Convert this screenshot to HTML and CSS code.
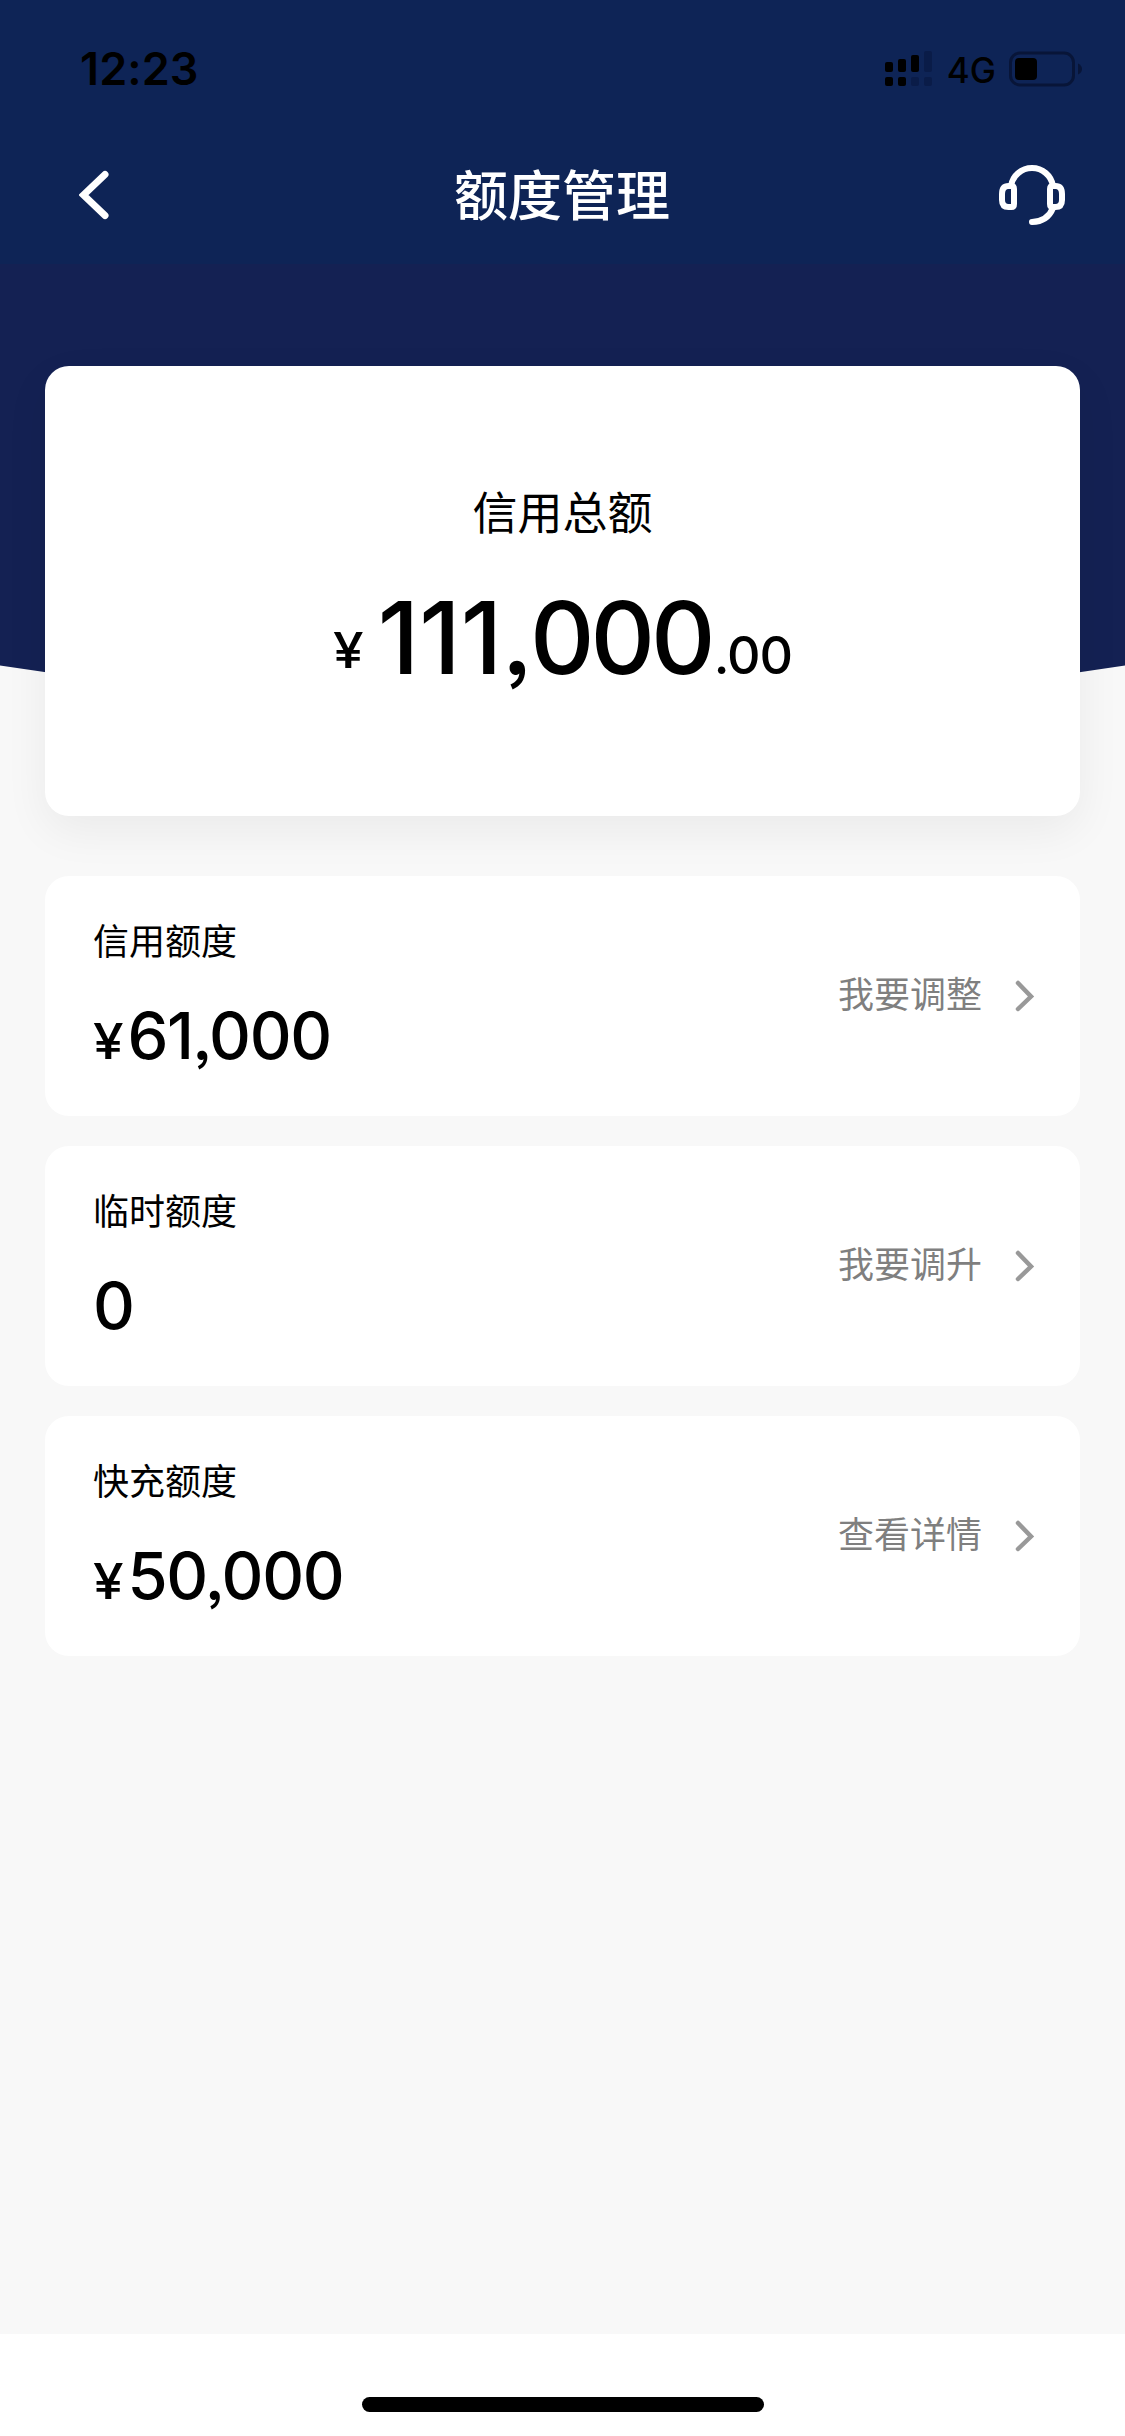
FILE: index.html
```html
<!DOCTYPE html>
<html lang="zh-CN">
<head>
<meta charset="utf-8">
<title>额度管理</title>
<link rel="stylesheet" href="styles.css">
</head>
<body>
<div class="screen">
  <header class="header">
    <div class="status">
      <span class="time">12:23</span>
      <div class="indicators">
        <svg class="signal" width="47" height="36" viewBox="0 0 47 36">
          <rect x="0" y="11" width="8" height="10" rx="2"/>
          <rect x="13" y="8" width="8" height="13" rx="2"/>
          <rect x="26" y="4" width="8" height="17" rx="2"/>
          <rect class="dim" x="39" y="0" width="8" height="21" rx="2"/>
          <rect x="0" y="26" width="8" height="9" rx="2"/>
          <rect x="13" y="26" width="8" height="9" rx="2"/>
          <rect class="dim" x="26" y="26" width="8" height="9" rx="2"/>
          <rect class="dim" x="39" y="26" width="8" height="9" rx="2"/>
        </svg>
        <span class="network">4G</span>
        <svg class="battery" width="74" height="36" viewBox="0 0 74 36">
          <rect x="1.5" y="2" width="63" height="32" rx="9.5" fill="none" stroke="#081538" stroke-width="3"/>
          <rect x="6" y="7" width="22" height="22" rx="4"/>
          <path d="M69 12.500Q73 14.500 73 18T69 23.500Z" fill="#081538"/>
        </svg>
      </div>
    </div>
    <nav class="nav">
      <svg class="back" width="30" height="54" viewBox="0 0 30 54">
        <path d="M26 6.500L4.500 27L26 47.500" fill="none" stroke="#fff" stroke-width="7" stroke-linecap="round" stroke-linejoin="miter"/>
      </svg>
      <h1 class="title">额度管理</h1>
      <svg class="support" width="66" height="66" viewBox="0 0 66 66" fill="none" stroke="#fff" stroke-width="6" stroke-linecap="round">
        <path d="M12 24A21.250 21.250 0 0 1 54 24"/>
        <path d="M3 32Q3 24 9.500 24H12.500Q15 24 15 27V42Q15 45 12.500 45H9.500Q3 45 3 38Z"/>
        <path d="M63 32Q63 24 56.500 24H53.500Q51 24 51 27V42Q51 45 53.500 45H56.500Q63 45 63 38Z"/>
        <path d="M54 46Q48.500 59.500 33 60"/>
      </svg>
    </nav>
  </header>
  <main class="content">
    <section class="total">
      <h2 class="total-label">信用总额</h2>
      <p class="amount"><span class="yen">¥</span><span class="ones">111</span><span class="comma">,</span><span class="zeros">000</span><span class="cents">.00</span></p>
    </section>
    <a class="row">
      <div class="info"><span class="label">信用额度</span><span class="value"><span class="yen-small">¥</span>61,000</span></div>
      <div class="action"><span>我要调整</span><svg width="20" height="32" viewBox="0 0 20 32"><path d="M3 3L16 16.500L3 29"/></svg></div>
    </a>
    <a class="row">
      <div class="info"><span class="label">临时额度</span><span class="value">0</span></div>
      <div class="action"><span>我要调升</span><svg width="20" height="32" viewBox="0 0 20 32"><path d="M3 3L16 16.500L3 29"/></svg></div>
    </a>
    <a class="row">
      <div class="info"><span class="label">快充额度</span><span class="value"><span class="yen-small">¥</span>50,000</span></div>
      <div class="action"><span>查看详情</span><svg width="20" height="32" viewBox="0 0 20 32"><path d="M3 3L16 16.500L3 29"/></svg></div>
    </a>
  </main>
  <footer class="home"><div class="home-bar"></div></footer>
</div>
</body>
</html>
```
FILE: styles.css
```css
* { box-sizing: border-box; margin: 0; padding: 0; }
svg { display: block; flex: none; }
body { background: #fff; font-family: "Noto Sans CJK SC", "Noto Sans", sans-serif; color: #000; }
.screen { width: 1125px; height: 2436px; display: flex; flex-direction: column; overflow: hidden; }

.header { height: 264px; background: #0e2456; }
.status { height: 138px; padding: 0 42px 0 80px; display: flex; justify-content: space-between; align-items: center; }
.time { font: 600 45px/60px Inter, sans-serif; letter-spacing: 0.1px; }
.indicators { display: flex; align-items: center; }
.signal .dim { fill: #0a1c48; }
.network { font: 500 35px/40px Inter, sans-serif; margin: 2px 13px 0 15px; }
.nav { height: 114px; padding: 0 60px 0 79px; display: grid; grid-template-columns: 66px 1fr 66px; align-items: center; }
.title { font-size: 54px; font-weight: 500; line-height: 80px; color: #fff; text-align: center; padding: 0 20px 4px 0; }

.content { position: relative; flex: 1; background: #f8f8f8; padding: 102px 45px 0; display: flex; flex-direction: column; gap: 30px; }
/* Navy backdrop with a curved lower edge, lying behind the total card */
.content::before { content: ""; position: absolute; left: 0; top: 0; width: 1125px; height: 460px; background: #142153; clip-path: path("M0 0H1125V401.500Q562.500 489 0 401.500Z"); }
.total { position: relative; height: 450px; margin-bottom: 30px; padding-top: 112px; border-radius: 24px; background: #fff; box-shadow: 0 15px 45px rgba(0, 0, 0, 0.06); text-align: center; }
.total-label { font-size: 45px; font-weight: 400; line-height: 66px; }
.amount { margin-top: 34px; font: 500 100px/120px Inter, sans-serif; font-feature-settings: "ss03"; white-space: nowrap; }
.yen, .yen-small { display: inline-block; font-size: 50px; line-height: 1; transform: scaleX(1.1); transform-origin: left; }
.yen { vertical-align: 6px; margin-right: 17px; }
.comma { letter-spacing: -2.5px; }
.zeros { letter-spacing: -4px; }
.cents { font-size: 52px; line-height: 1; letter-spacing: -1px; margin-left: 2px; }

.row { height: 240px; padding: 36px 45px 0 48px; border-radius: 24px; background: #fff; display: flex; justify-content: space-between; align-items: flex-start; }
.info { display: flex; flex-direction: column; gap: 31px; }
.label { font-size: 36px; line-height: 54px; }
.value { font: 500 65px/78px Inter, sans-serif; letter-spacing: -1.4px; font-feature-settings: "ss03"; }
.yen-small { margin-right: 8px; }
.action { display: flex; align-items: center; gap: 33px; margin-top: 53px; font-size: 36px; line-height: 54px; color: #7f7f7f; }
.action svg { margin-top: 8px; fill: none; stroke: #999; stroke-width: 4.5; stroke-linecap: round; }

.home { height: 102px; background: #fff; display: flex; justify-content: center; padding-top: 63px; }
.home-bar { width: 402px; height: 15px; border-radius: 8px; background: #000; }
```
